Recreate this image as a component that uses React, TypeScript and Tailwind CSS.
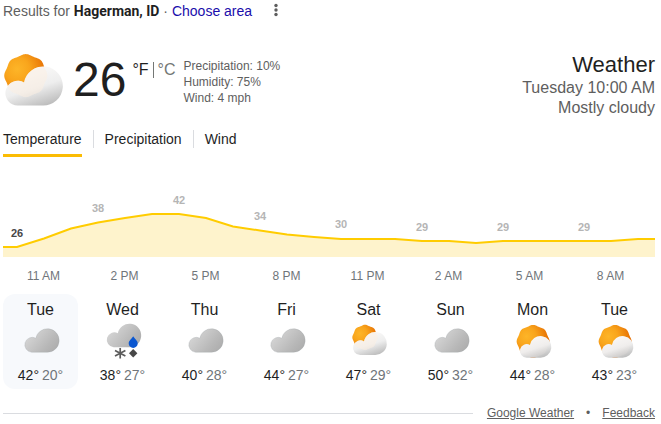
import { useId } from "react";

type Kind = "cloudy" | "mixed" | "mostlyCloudy" | "mostlySunny";

const CLOUD =
  "M10.7 31.3A7.5 7.5 0 1 1 14.8 17.2A11.8 11.8 0 1 1 26.4 31.3Z";

function sunPath(cx: number, cy: number, r: number) {
  const points: string[] = [];
  for (let i = 0; i < 144; i++) {
    const a = (i / 144) * Math.PI * 2;
    const d = r * (0.97 + 0.028 * Math.cos(8 * a));
    points.push(`${(cx + d * Math.sin(a)).toFixed(2)} ${(cy - d * Math.cos(a)).toFixed(2)}`);
  }
  return `M${points.join("L")}Z`;
}

function WeatherIcon({ kind, label, className, viewBox = "0 0 40 40" }: { kind: Kind; label: string; className: string; viewBox?: string }) {
  const id = useId();
  const front =
    kind === "mostlyCloudy"
      ? "M11.3 34A7.3 7.3 0 1 1 15 20.4A11.5 11.5 0 1 1 26 34Z"
      : "M13.6 36.7A6.8 6.8 0 1 1 16.9 23.9A10.8 10.8 0 1 1 26.7 36.7Z";
  const sun = kind === "mostlyCloudy" ? sunPath(16, 16.4, 12.7) : sunPath(20.1, 20.4, 16.5);
  return (
    <svg role="img" aria-label={label} viewBox={viewBox} className={className}>
      <defs>
        <linearGradient id={`${id}g`} x1="0" y1="0.2" x2="1" y2="0.8">
          <stop offset="0" stopColor="#dadada" />
          <stop offset="0.7" stopColor="#b8b8b8" />
          <stop offset="1" stopColor="#acacac" />
        </linearGradient>
        <radialGradient id={`${id}s`} cx="0.3" cy="0.35" r="0.7">
          <stop offset="0" stopColor="#fdb528" />
          <stop offset="0.4" stopColor="#f9a51c" />
          <stop offset="1" stopColor="#e56b00" />
        </radialGradient>
        <linearGradient id={`${id}w`} x1="0.35" y1="0.05" x2="0.8" y2="1">
          <stop offset="0" stopColor="#fbfaf9" />
          <stop offset="0.5" stopColor="#eeeeee" />
          <stop offset="1" stopColor="#b8b8b8" />
        </linearGradient>
        <clipPath id={`${id}c`}>
          <path d={front} />
        </clipPath>
      </defs>
      {kind === "cloudy" && (
        <path d={CLOUD} fill={`url(#${id}g)`} stroke="#9aa0a6" strokeWidth="0.4" strokeOpacity="0.7" />
      )}
      {kind === "mixed" && (
        <>
          <path d={CLOUD} transform="translate(0 -5)" fill={`url(#${id}g)`} />
          <path d="M30.2 15.2C31.2 17.4 34.7 19.3 34.7 22.4A4.5 4.5 0 0 1 25.7 22.4C25.7 19.3 29.2 17.4 30.2 15.2Z" fill="#0b57d0" />
          <path d="M17.2 27V37.4M12 29.4L22.4 35M22.4 29.4L12 35" stroke="#5c5c5c" strokeWidth="1.7" />
          <path d="M30.2 28L34.4 32.2L30.2 36.4L26 32.2Z" fill="#474747" />
        </>
      )}
      {(kind === "mostlyCloudy" || kind === "mostlySunny") && (
        <>
          <path d={sun} fill={`url(#${id}s)`} />
          <path d={front} fill={`url(#${id}w)`} />
          <path d={sun} clipPath={`url(#${id}c)`} fill="#fbeee2" fillOpacity={kind === "mostlyCloudy" ? 0.55 : 0.15} />
        </>
      )}
    </svg>
  );
}

const days: { name: string; kind: Kind; label: string; high: number; low: number }[] = [
  { name: "Tue", kind: "cloudy", label: "Cloudy", high: 42, low: 20 },
  { name: "Wed", kind: "mixed", label: "Rain and snow", high: 38, low: 27 },
  { name: "Thu", kind: "cloudy", label: "Cloudy", high: 40, low: 28 },
  { name: "Fri", kind: "cloudy", label: "Cloudy", high: 44, low: 27 },
  { name: "Sat", kind: "mostlyCloudy", label: "Mostly cloudy", high: 47, low: 29 },
  { name: "Sun", kind: "cloudy", label: "Cloudy", high: 50, low: 32 },
  { name: "Mon", kind: "mostlySunny", label: "Mostly sunny", high: 44, low: 28 },
  { name: "Tue", kind: "mostlySunny", label: "Mostly sunny", high: 43, low: 23 },
];

const hours = ["11 AM", "2 PM", "5 PM", "8 PM", "11 PM", "2 AM", "5 AM", "8 AM"];

const readings = [
  { value: 26, x: 14, y: 50 },
  { value: 38, x: 95, y: 25 },
  { value: 42, x: 176, y: 17 },
  { value: 34, x: 257, y: 33 },
  { value: 30, x: 338, y: 41 },
  { value: 29, x: 419, y: 44 },
  { value: 29, x: 500, y: 44 },
  { value: 29, x: 581, y: 44 },
];

const LINE =
  "0,60 14,60 41,51.5 68,41.5 95,35.5 122,31 149,27 176,27 203,31 230,39.5 257,43.5 284,47.5 311,50 338,52 392,52 419,54 446,54 473,56 500,54 608,54 635,52 652,52";

function TemperatureChart() {
  return (
    <svg role="img" aria-label="Hourly temperature" viewBox="0 0 652 70" className="block w-full">
      <polygon points={`${LINE} 652,70 0,70`} fill="#fef3cc" />
      <polyline points={LINE} fill="none" stroke="#ffcc00" strokeWidth="2" />
      {readings.map((r) => (
        <text key={r.x} x={r.x} y={r.y} textAnchor="middle" className={r.x === 14 ? "fill-[#474747] text-[11px] font-bold" : "fill-[#b5b5b5] text-[11px] font-bold"}>
          {r.value}
        </text>
      ))}
    </svg>
  );
}

export default function App() {
  return (
    <main className="bg-white pr-[6px] pl-[3px] font-['Liberation_Sans',Arial,sans-serif] text-sm text-[#1f1f1f]">
      <header className="flex h-[22px] items-center">
        <p className="text-[#5e5e5e]">
          Results for <b className="font-['Roboto',sans-serif] font-bold text-[#1f1f1f]">Hagerman, ID</b> ·{" "}
          <a href="#area" className="text-[#1a0dab]">Choose area</a>
        </p>
        <button aria-label="More options" className="ml-[18px] flex h-5 w-3 items-start justify-center pt-[2px]">
          <svg viewBox="0 0 4 14" className="h-[14px] w-1 fill-[#5e5e5e]">
            <circle cx="2" cy="2.5" r="1.7" />
            <circle cx="2" cy="7" r="1.7" />
            <circle cx="2" cy="11.5" r="1.7" />
          </svg>
        </button>
      </header>

      <section className="flex items-start justify-between pt-[30px]">
        <div className="flex items-start">
          <WeatherIcon kind="mostlyCloudy" label="Mostly cloudy" viewBox="2.6 2.5 35.3 35.3" className="size-[60px]" />
          <span className="ml-[10px] text-5xl leading-[56px]">26</span>
          <div className="ml-[6px] flex items-center pt-2 text-base leading-5">
            <button>°F</button>
            <span className="mx-1 h-4 w-px bg-[#747775]" />
            <button className="text-[#747775]">°C</button>
          </div>
          <ul className="ml-2 pt-[6px] text-xs text-[#5e5e5e]">
            <li>Precipitation: 10%</li>
            <li>Humidity: 75%</li>
            <li>Wind: 4 mph</li>
          </ul>
        </div>
        <div className="text-right text-base leading-5 text-[#5e5e5e]">
          <h1 className="text-[22px] leading-[26px] text-[#1f1f1f]">Weather</h1>
          <p>Tuesday 10:00 AM</p>
          <p>Mostly cloudy</p>
        </div>
      </section>

      <nav className="mt-3 flex items-start">
        <button className="h-[27px] border-b-3 border-[#fbbc04] pb-[6px] leading-[18px]">Temperature</button>
        <span className="ml-[11px] h-[18px] w-px bg-[#dadce0]" />
        <button className="ml-[11px] leading-[18px]">Precipitation</button>
        <span className="ml-[11px] h-[18px] w-px bg-[#dadce0]" />
        <button className="ml-[11px] leading-[18px]">Wind</button>
      </nav>

      <section className="pt-[30px]">
        <TemperatureChart />
        <ol className="grid grid-cols-8 pt-[11px] pr-1 text-center text-xs text-[#70757a]">
          {hours.map((h) => (
            <li key={h}>{h}</li>
          ))}
        </ol>
      </section>

      <section className="grid grid-cols-8 gap-[7px] pt-[10px] pr-[3px]">
        {days.map((d, i) => (
          <button
            key={i}
            className={
              i === 0
                ? "flex h-[95px] flex-col items-center rounded-xl bg-[#f7f9fc] pt-1"
                : "flex h-[95px] flex-col items-center rounded-xl pt-1"
            }
          >
            <span className="text-base leading-[23px]">{d.name}</span>
            <WeatherIcon kind={d.kind} label={d.label} className="size-10" />
            <span className="flex gap-[3px] pt-1 leading-5">
              <span>{d.high}°</span>
              <span className="text-[#70757a]">{d.low}°</span>
            </span>
          </button>
        ))}
      </section>

      <footer className="flex items-center pt-4 text-xs text-[#5e5e5e]">
        <span className="mr-[14px] h-px flex-1 bg-[#dadce0]" />
        <a href="#source" className="underline">Google Weather</a>
        <span className="mx-3">•</span>
        <a href="#feedback" className="underline">Feedback</a>
      </footer>
    </main>
  );
}
